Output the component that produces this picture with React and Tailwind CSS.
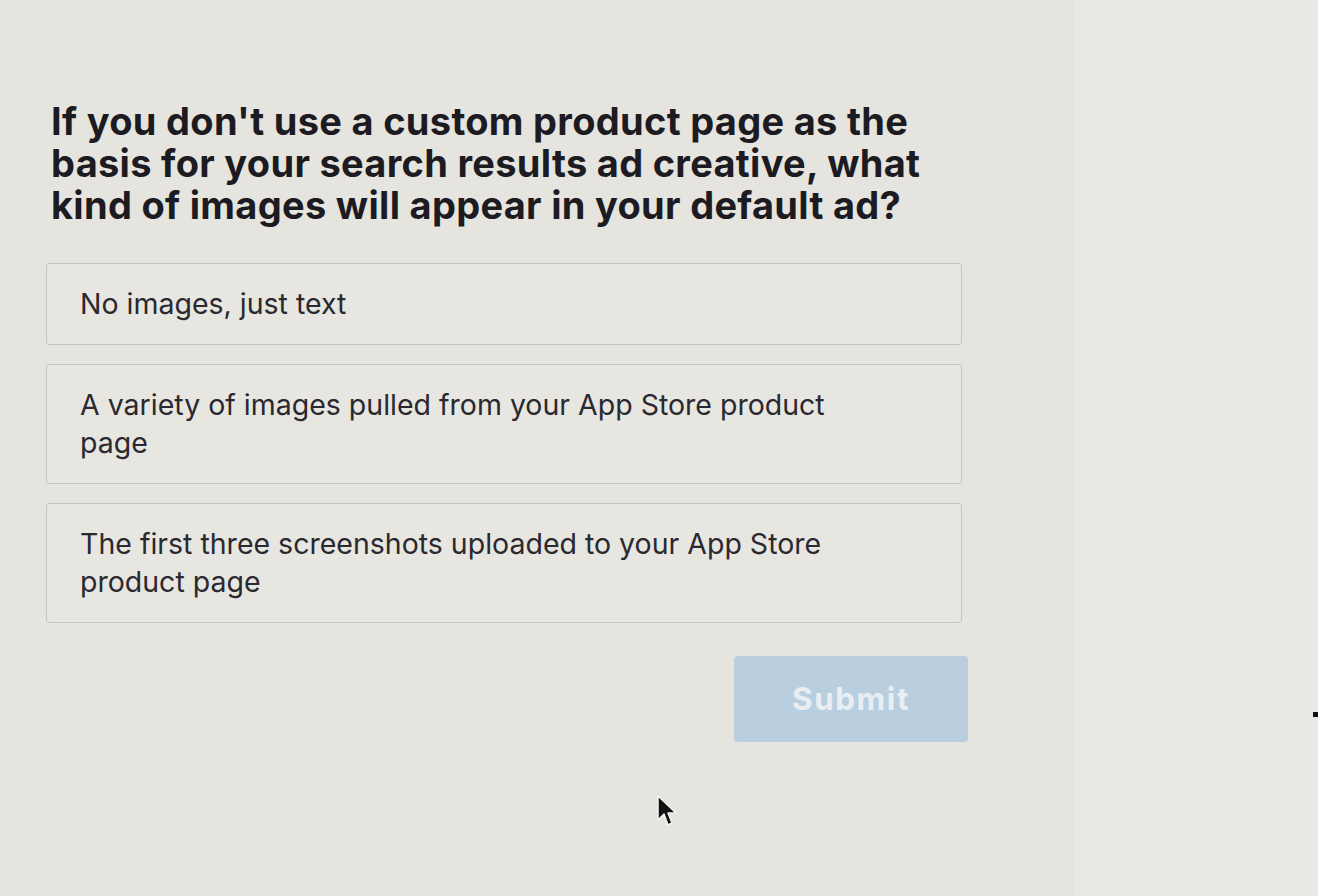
import React from 'react'

const options = [
  'No images, just text',
  'A variety of images pulled from your App Store product page',
  'The first three screenshots uploaded to your App Store product page',
]

const Cursor = () => (
  <svg width="22" height="34" viewBox="0 0 22 34" className="absolute left-[656px] top-[794px]">
    <path d="M2 2 L2 26 L8 20 L12 31 L16 29 L12 19 L20 19 Z" fill="#111" stroke="#f4f4f2" strokeWidth="1.5" strokeLinejoin="round" />
  </svg>
)

export default function App() {
  return (
    <div
      className="relative h-[896px] w-[1318px] overflow-hidden bg-[#e5e4df] text-[#1d1b22]"
      style={{ fontFamily: 'Inter, "Noto Sans", sans-serif' }}
    >
      <div className="flex">
        <div className="w-[1075px] pl-[46px] pt-[100px]">
          <div className="w-[916px]">
            <h1 className="w-[905px] pl-[5px] text-[38px] font-bold leading-[42px] tracking-[0.3px]">
              If you don't use a custom product page as the basis for your search results ad creative, what kind of images will appear in your default ad?
            </h1>

            <div className="mt-[37px] flex flex-col gap-[19px]">
              {options.map((option) => (
                <div
                  key={option}
                  className="rounded-[3px] border border-[#c6c5c0] bg-[#e7e6e1] py-[21px] pl-[33px] pr-[105px] text-[28.5px] leading-[38px] text-[#2a2930]"
                >
                  {option}
                </div>
              ))}
            </div>

            <div className="mt-[33px] flex justify-end">
              <button className="mr-[-6px] h-[86px] w-[234px] rounded-[4px] bg-[#b9cfdf] text-[31.5px] font-bold tracking-[1.5px] text-[#e8eef2]">
                Submit
              </button>
            </div>
          </div>
        </div>
        <div className="h-[896px] flex-1 bg-[#e9e8e4]" />
      </div>
      <Cursor />
      <div className="absolute left-[1313px] top-[712px] h-[5px] w-[5px] bg-[#111]" />
    </div>
  )
}
